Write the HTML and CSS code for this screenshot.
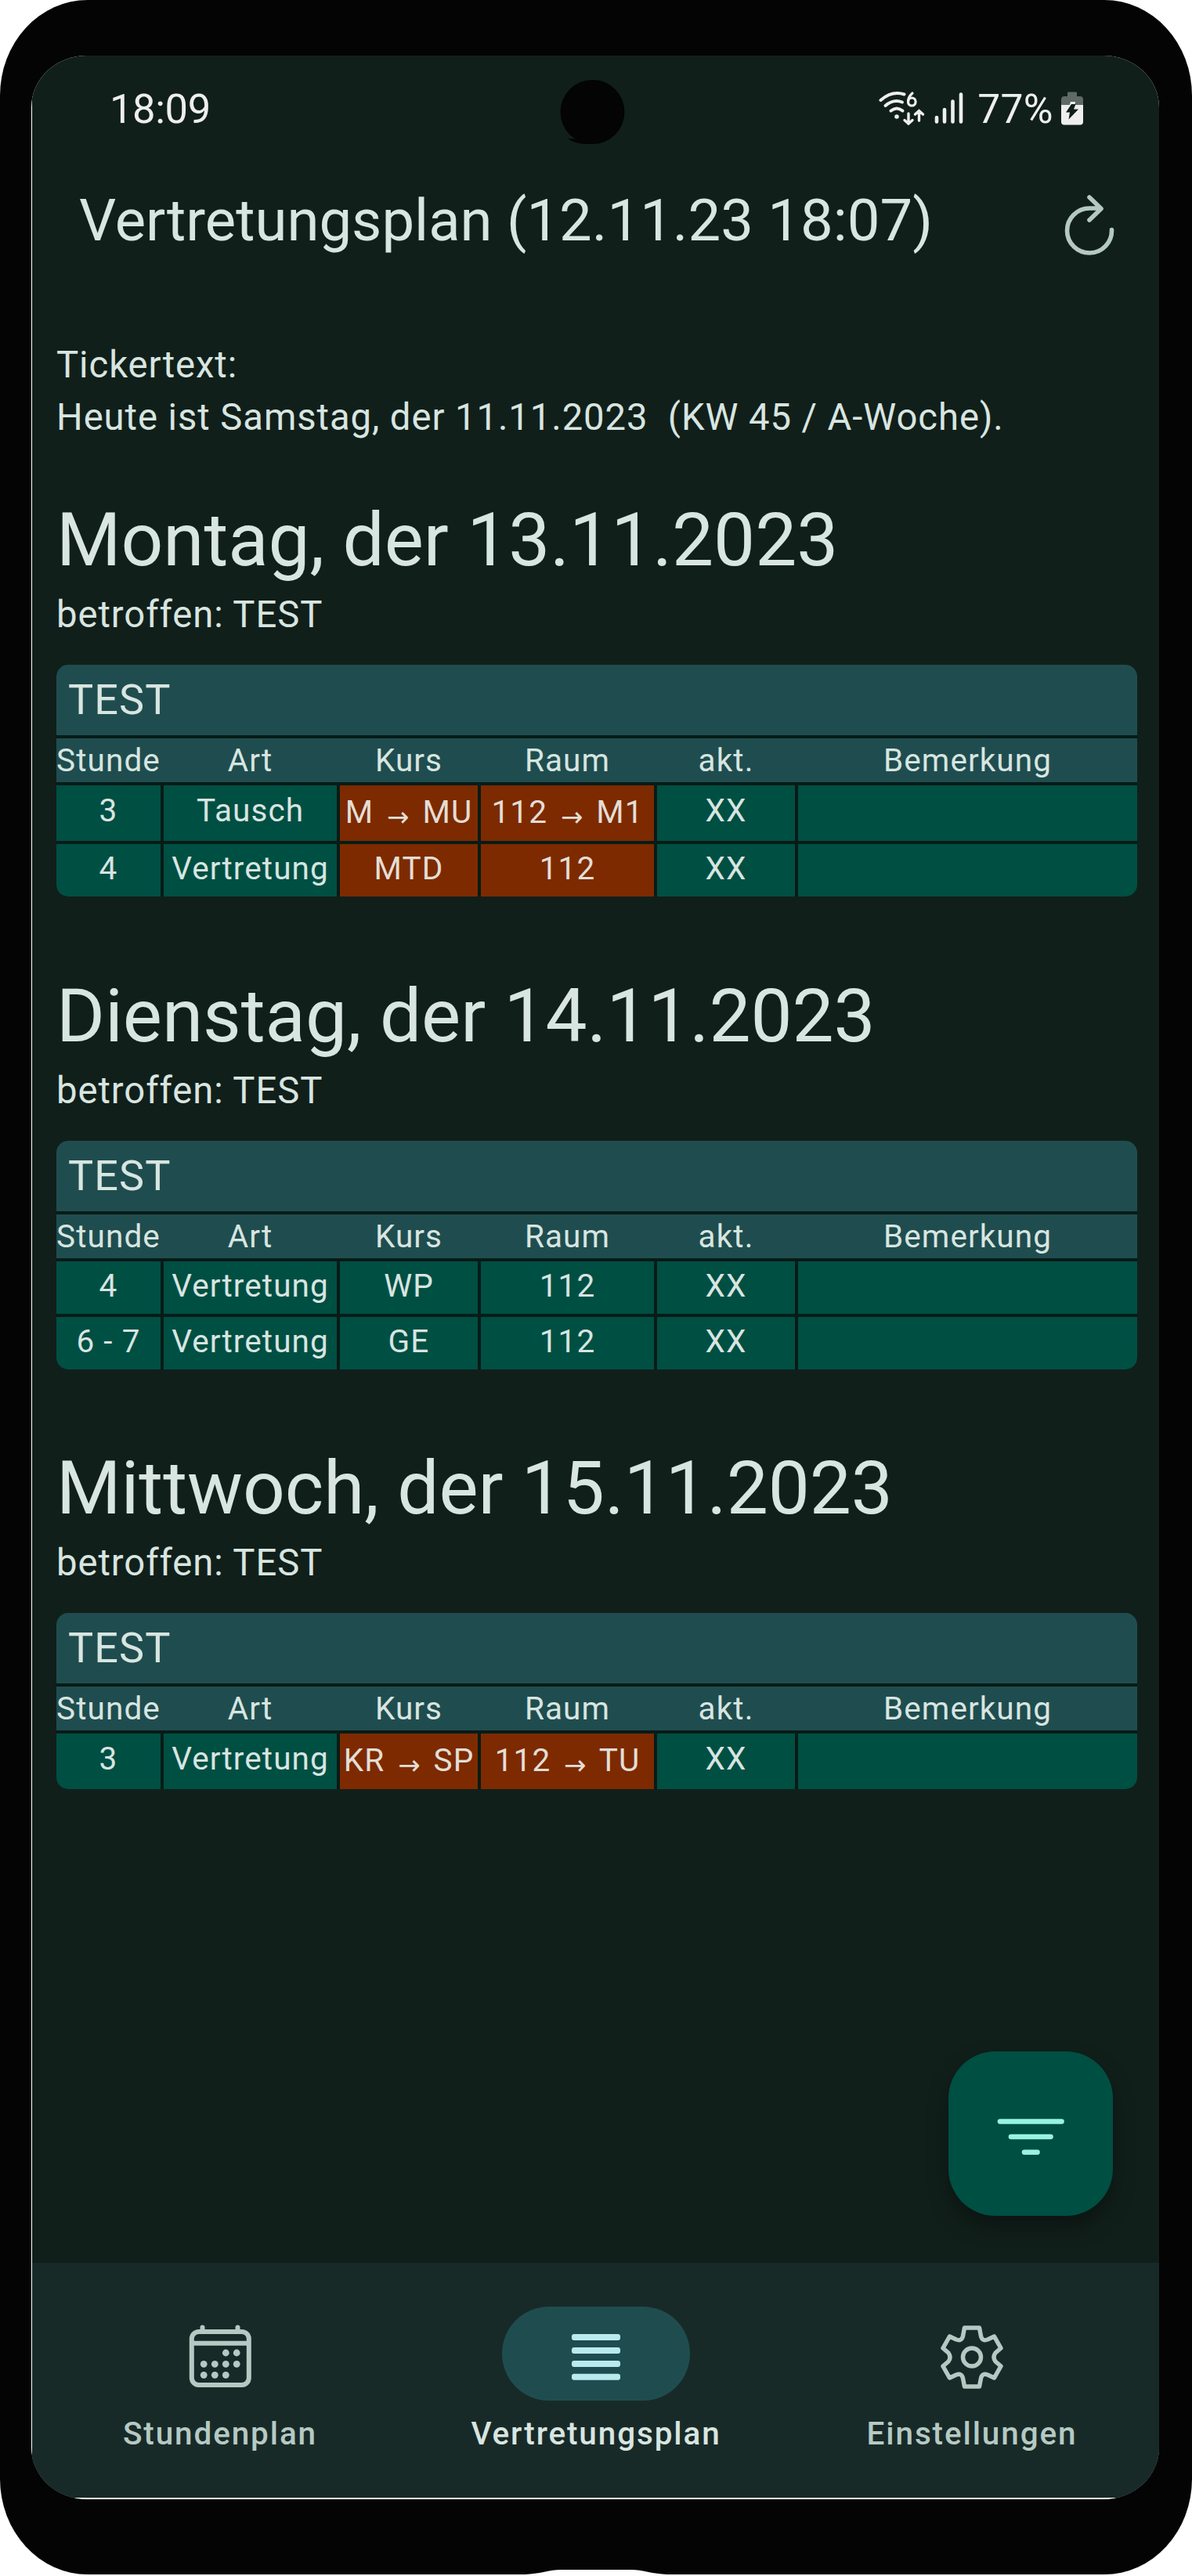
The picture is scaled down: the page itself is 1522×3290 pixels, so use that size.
FILE: index.html
```html
<!DOCTYPE html>
<html lang="de">
<head>
<meta charset="utf-8">
<title>Vertretungsplan</title>
<link rel="stylesheet" href="styles.css">
</head>
<body>
<div class="phone">
  <div class="bezel">
    <div class="screen">
      <svg class="camera" width="84" height="84" viewBox="0 0 84 84"><circle cx="41.500" cy="41" r="41"/><path d="M10 75l10 .5L43 70v12H32Q18 81 10 75z"/></svg>
      <div class="statusbar">
        <span class="clock">18:09</span>
        <div class="indicators">
          <svg class="signal" width="112" height="48" viewBox="1120 116 112 48" fill="none" stroke="#eeeeee" stroke-linecap="round">
            <g stroke-width="4">
              <path d="M1125.500 129Q1140 116.500 1155.500 121.500"/>
              <path d="M1131.500 136Q1142 127 1153 131.500"/>
              <path d="M1138.500 142.500Q1146 136.500 1153.500 142.500"/>
              <path stroke-width="3.200" d="M1166 120Q1160.500 125 1160.500 131"/>
              <ellipse stroke-width="3.200" cx="1165.300" cy="131" rx="4.800" ry="5"/>
              <path stroke-width="3.400" d="M1161 146v12M1156 154.500l5 4.500l5-4.500M1174.500 155v-12M1169.500 147l5-4.500l5 4.500"/>
              <path stroke-width="4.600" d="M1197 151v5.500M1207 141v15.500M1217.500 130.500v26M1228 121.500v35"/>
            </g>
            <circle cx="1146" cy="150" r="2.800" fill="#eeeeee" stroke="none"/>
          </svg>
          <span class="percent">77%</span>
          <svg class="battery" width="30" height="44" viewBox="0 0 30 44"><path fill="#606966" d="M9 1.500Q9 .5 10 .5H20Q21 .5 21 1.500V6H25Q29 6 29 10V18H1V10Q1 6 5 6H9z"/><path fill="#eeeeee" d="M1 17H29V38.500Q29 42.500 25 42.500H5Q1 42.500 1 38.500z"/><path fill="#eeeeee" d="M13 13h6l-1 6h-7z"/><path fill="#101e1a" d="M14 16L7 26.500H12L10.500 35.500L23 22.500H17L19.500 16z"/></svg>
        </div>
      </div>
      <header class="appbar">
        <h1>Vertretungsplan (12.11.23 18:07)</h1>
        <svg class="refresh" width="66" height="80" viewBox="1358 246 66 80"><path d="M1419.500 292.500A28.500 28.500 0 1 1 1391 265H1405M1391 251L1406 265.500L1391 280"/></svg>
      </header>
      <main>
        <p class="ticker">Tickertext:<br>Heute ist Samstag, der 11.11.2023&nbsp; (KW 45 / A-Woche).</p>
        <section class="day">
          <h2>Montag, der 13.11.2023</h2>
          <p class="affected">betroffen: TEST</p>
          <div class="plan">
            <div class="group">TEST</div>
            <div class="row head"><span>Stunde</span><span>Art</span><span>Kurs</span><span>Raum</span><span>akt.</span><span>Bemerkung</span></div>
            <div class="row tall"><span>3</span><span>Tausch</span><span class="changed moved">M <i>→</i> MU</span><span class="changed moved">112 <i>→</i> M1</span><span>XX</span><span></span></div>
            <div class="row"><span>4</span><span>Vertretung</span><span class="changed">MTD</span><span class="changed">112</span><span>XX</span><span></span></div>
          </div>
        </section>
        <section class="day">
          <h2>Dienstag, der 14.11.2023</h2>
          <p class="affected">betroffen: TEST</p>
          <div class="plan">
            <div class="group">TEST</div>
            <div class="row head"><span>Stunde</span><span>Art</span><span>Kurs</span><span>Raum</span><span>akt.</span><span>Bemerkung</span></div>
            <div class="row"><span>4</span><span>Vertretung</span><span>WP</span><span>112</span><span>XX</span><span></span></div>
            <div class="row"><span>6 - 7</span><span>Vertretung</span><span>GE</span><span>112</span><span>XX</span><span></span></div>
          </div>
        </section>
        <section class="day">
          <h2>Mittwoch, der 15.11.2023</h2>
          <p class="affected">betroffen: TEST</p>
          <div class="plan">
            <div class="group">TEST</div>
            <div class="row head"><span>Stunde</span><span>Art</span><span>Kurs</span><span>Raum</span><span>akt.</span><span>Bemerkung</span></div>
            <div class="row tall"><span>3</span><span>Vertretung</span><span class="changed moved">KR <i>→</i> SP</span><span class="changed moved">112 <i>→</i> TU</span><span>XX</span><span></span></div>
          </div>
        </section>
      </main>
      <button class="fab" aria-label="Filter"><svg width="90" height="50" viewBox="1271 2704 90 50"><path d="M1277 2709.500H1355.500M1291 2729H1341.500M1308 2748.700H1324.500"/></svg></button>
      <nav>
        <a class="tab">
          <span class="pill"><svg width="90" height="90" viewBox="235.500 2962 90 90" fill="none" stroke="#b5c9c3" stroke-width="6">
            <rect x="244.300" y="2979" width="73" height="68" rx="9"/><path d="M244 2993.700H317.500"/><path stroke-linecap="round" d="M258 2973.500V2978M303 2973.500V2978"/>
            <g fill="#b5c9c3" stroke="none"><circle cx="287.800" cy="3006" r="4.400"/><circle cx="301.700" cy="3006" r="4.400"/><circle cx="259.700" cy="3020.300" r="4.400"/><circle cx="273.800" cy="3020.300" r="4.400"/><circle cx="287.800" cy="3020.300" r="4.400"/><circle cx="301.700" cy="3020.300" r="4.400"/><circle cx="259.700" cy="3034.300" r="4.400"/><circle cx="273.800" cy="3034.300" r="4.400"/><circle cx="287.800" cy="3034.300" r="4.400"/></g>
          </svg></span>
          Stundenplan
        </a>
        <a class="tab active">
          <span class="pill"><svg width="90" height="90" viewBox="716 2961 90 90" fill="#b9eaee"><rect x="730" y="2981" width="62" height="8" rx="3"/><rect x="730" y="2998" width="62" height="8" rx="3"/><rect x="730" y="3015" width="62" height="8" rx="3"/><rect x="730" y="3031.700" width="62" height="8" rx="3"/></svg></span>
          Vertretungsplan
        </a>
        <a class="tab">
          <span class="pill"><svg width="90" height="90" viewBox="-45 -49.500 90 90" fill="none" stroke="#b5c9c3" stroke-width="5.500" stroke-linejoin="round">
            <path d="M-9.500-37.500H9.500L11.500-27Q13-20 20-22.500L28.500-26.500L37-11.500L30-5.500Q26 0 30 5.500L37 11.500L28.500 26.500L20 22.500Q13 20 11.500 27L9.500 37.500H-9.500L-11.500 27Q-13 20-20 22.500L-28.500 26.500L-37 11.500L-30 5.500Q-26 0-30-5.500L-37-11.500L-28.500-26.500L-20-22.500Q-13-20-11.500-27Z"/><circle r="11.500"/>
          </svg></span>
          Einstellungen
        </a>
      </nav>
    </div>
  </div>
  <svg class="chin" width="182" height="6" viewBox="0 0 182 6"><path d="M0 6Q14 5 24 3Q36 0 46 0H136Q146 0 158 3Q168 5 182 6z"/></svg>
</div>
</body>
</html>
```
FILE: styles.css
```css
* { box-sizing: border-box; margin: 0; padding: 0; }

body {
  width: 1522px;
  height: 3290px;
  overflow: hidden;
  background: #fff;
  font-family: Roboto, "Liberation Sans", sans-serif;
  color: #d8e5e0;
}

.phone {
  position: relative;
  width: 1522px;
  height: 3288px;
  padding: 71px 42px 96px 40px;
  background: #040404;
  border-radius: 112px / 122px;
}

.bezel {
  height: 3121px;
  padding: 0 0 2px 1px;
  overflow: hidden;
  background: #fff;
  border-radius: 71px / 66px;
}

.screen {
  position: relative;
  display: flex;
  flex-direction: column;
  height: 3119px;
  background: #111f1a;
}

.camera { position: absolute; left: 674px; top: 31px; fill: #040404; }

.statusbar {
  display: flex;
  justify-content: space-between;
  align-items: center;
  height: 80px;
  margin-top: 28px;
  padding: 0 96px 0 99px;
  color: #eee;
}

.clock { font-size: 52.5px; letter-spacing: -0.4px; }
.indicators { display: flex; align-items: center; }
.percent { margin: 0 9px 0 17px; font-size: 51.5px; letter-spacing: 0.4px; }

.appbar {
  display: flex;
  justify-content: space-between;
  align-items: center;
  height: 205px;
  padding: 0 56px 0 60px;
}

h1 { font-size: 74.25px; font-weight: 400; white-space: nowrap; }
.refresh { position: relative; top: 5px; fill: none; stroke: #b5c9c3; stroke-width: 5.6px; stroke-linecap: round; stroke-linejoin: round; }

main { flex: 1; padding: 49px 28px 0 31px; }

.ticker, .affected { font-size: 47.25px; letter-spacing: 0.92px; white-space: nowrap; }
.ticker { line-height: 66.5px; margin-bottom: 63px; }
.day { margin-bottom: 92px; }
.day:nth-of-type(2) { margin-bottom: 91px; }
h2 { font-size: 94.5px; line-height: 122px; letter-spacing: -0.06px; font-weight: 400; white-space: nowrap; }
.affected { line-height: 68px; margin-bottom: 30px; }

.plan {
  display: grid;
  gap: 4px;
  overflow: hidden;
  border-radius: 15px;
  background: #071b17;
}

.group {
  height: 90px;
  padding-left: 15px;
  font-size: 54px;
  line-height: 90px;
  letter-spacing: 1.1px;
  background: #1f4d4f;
}

.row {
  display: grid;
  grid-template-columns: 133px 221px 176px 221px 176px 433px;
  column-gap: 4px;
  height: 67px;
  font-size: 40.5px;
  line-height: 63px;
  letter-spacing: 1.08px;
  text-align: center;
  white-space: nowrap;
}

.row span { background: #004f43; }
.row .changed { background: #7d2a00; color: #e3ded5; }
.tall { height: 71px; line-height: 64px; }
.row .moved { line-height: 68px; }
.moved i {
  display: inline-block;
  width: 40px;
  font: 34px/1 "DejaVu Sans", sans-serif;
  letter-spacing: 0;
  vertical-align: -4px;
}
.head { height: 56px; line-height: 56px; background: #1f4d4f; }
.row.head span { background: none; }

.fab {
  position: absolute;
  right: 59px;
  bottom: 360px;
  display: grid;
  place-items: center;
  width: 210px;
  height: 210px;
  border: 0;
  border-radius: 60px;
  background: #004f43;
  box-shadow: 0 14px 24px rgba(8, 12, 12, 0.5);
}
.fab svg { position: relative; top: 4px; fill: none; stroke: #98f3e1; stroke-width: 6.6px; stroke-linecap: round; }

nav { display: grid; grid-template-columns: repeat(3, 480px); height: 300px; background: #182a28; }
.tab {
  display: flex;
  flex-direction: column;
  align-items: center;
  padding-top: 56px;
  font-size: 40.5px;
  font-weight: 500;
  line-height: 54px;
  letter-spacing: 1.86px;
  color: #b5c9c3;
}
.pill { display: grid; place-items: center; width: 240px; height: 120px; margin-bottom: 15px; border-radius: 60px; }
.active { color: #d8e5e0; }
.active .pill { background: #1f4d4f; }

.chin { position: absolute; left: 670px; bottom: 0; fill: #fff; }
```
